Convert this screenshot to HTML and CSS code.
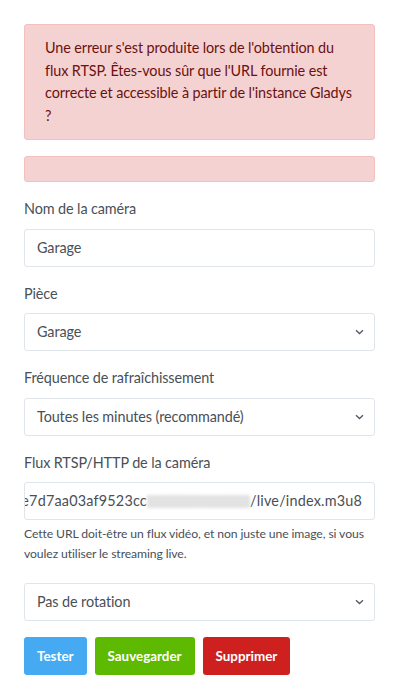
FILE: index.html
```html
<!DOCTYPE html>
<html lang="fr">
<head>
<meta charset="utf-8">
<title>Caméra</title>
<link rel="stylesheet" href="styles.css">
</head>
<body>
<div class="card">
  <div class="alert">Une erreur s'est produite lors de l'obtention du flux RTSP. Êtes-vous sûr que l'URL fournie est correcte et accessible à partir de l'instance Gladys ?</div>
  <div class="alert alert-empty"></div>

  <div class="form-group">
    <label class="form-label">Nom de la caméra</label>
    <div class="form-control">Garage</div>
  </div>

  <div class="form-group">
    <label class="form-label">Pièce</label>
    <div class="form-control select"><span>Garage</span><svg class="chev" width="9" height="6" viewBox="0 0 9 6"><path d="M1 1.2 L4.5 4.5 L8 1.2" fill="none" stroke="#555b66" stroke-width="1.4"/></svg></div>
  </div>

  <div class="form-group">
    <label class="form-label">Fréquence de rafraîchissement</label>
    <div class="form-control select"><span>Toutes les minutes (recommandé)</span><svg class="chev" width="9" height="6" viewBox="0 0 9 6"><path d="M1 1.2 L4.5 4.5 L8 1.2" fill="none" stroke="#555b66" stroke-width="1.4"/></svg></div>
  </div>

  <div class="form-group">
    <label class="form-label">Flux RTSP/HTTP de la caméra</label>
    <div class="form-control url"><span class="url-text">3f1e7d7aa03af9523cc<span class="blur"></span>/live/index.m3u8</span></div>
    <small class="form-text">Cette URL doit-être un flux vidéo, et non juste une image, si vous voulez utiliser le streaming live.</small>
  </div>

  <div class="form-group">
    <div class="form-control select"><span>Pas de rotation</span><svg class="chev" width="9" height="6" viewBox="0 0 9 6"><path d="M1 1.2 L4.5 4.5 L8 1.2" fill="none" stroke="#555b66" stroke-width="1.4"/></svg></div>
  </div>

  <div class="buttons">
    <button class="btn btn-blue">Tester</button>
    <button class="btn btn-green">Sauvegarder</button>
    <button class="btn btn-red">Supprimer</button>
  </div>
</div>
</body>
</html>
```

FILE: styles.css
```css
* { box-sizing: border-box; }
html, body { margin: 0; padding: 0; background: #fff; }
body {
  font-family: "Lato", "Liberation Sans", sans-serif;
  font-size: 14.4px;
  letter-spacing: -0.1px;
  line-height: 1.5;
  color: #495057;
}
.card {
  padding: 24px 24px 24px;
}
.alert {
  background: #f5d2d2;
  border: 1px solid #f1c1c0;
  color: #6b1110;
  border-radius: 3px;
  padding: 12px 20px;
  margin-bottom: 16px;
  line-height: 22.5px;
  min-height: 26px;
}
.alert-empty { height: 26px; padding: 0; }
.form-group { margin-bottom: 16px; }
.form-label {
  display: block;
  margin-bottom: 8px;
  line-height: 22.5px;
  color: #495057;
}
.form-control {
  height: 38px;
  border: 1px solid #e0e5ec;
  border-radius: 3px;
  padding: 6px 12px;
  line-height: 24px;
  color: #495057;
  background: #fff;
  display: flex;
  align-items: center;
}
.select { justify-content: space-between; padding-right: 10px; }
.chev { flex: none; }
.url { justify-content: flex-end; overflow: hidden; padding: 6px 12px 6px 0; }
.url-text { white-space: nowrap; display: flex; align-items: center; flex: none; letter-spacing: 0.2px; }
.blur {
  display: inline-block;
  width: 103px;
  height: 13px;
  background: repeating-linear-gradient(100deg, #e4e4e4 0px, #cfcfcf 2px, #ececec 4px);
  filter: blur(1.4px);
  opacity: 0.8;
}
.form-text {
  display: block;
  margin-top: 4px;
  font-size: 12.2px;
  line-height: 19.5px;
  color: #495057;
  margin-bottom: 20px;
}
.buttons { display: flex; gap: 8px; }
.btn {
  font-family: inherit;
  font-weight: 700;
  font-size: 13.4px;
  letter-spacing: 0;
  height: 38px;
  padding: 0 12px;
  border: 1px solid transparent;
  border-radius: 3px;
  color: #fff;
  cursor: pointer;
}
.btn-blue { background: #45aaf2; }
.btn-green { background: #5eba00; }
.btn-red { background: #cd201f; }
```
